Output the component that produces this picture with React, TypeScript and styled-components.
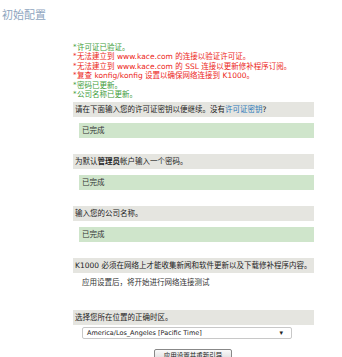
import * as React from 'react'
import styled, { createGlobalStyle } from 'styled-components'

const GlobalStyle = createGlobalStyle`
  html, body {
    margin: 0;
    padding: 0;
    background: #ffffff;
  }
  body {
    font-family: "DejaVu Sans", "Noto Sans CJK SC", sans-serif;
  }
`

const messages: { ok: boolean; text: string }[] = [
  { ok: true, text: '许可证已验证。' },
  { ok: false, text: '无法建立到 www.kace.com 的连接以验证许可证。' },
  { ok: false, text: '无法建立到 www.kace.com 的 SSL 连接以更新修补程序订阅。' },
  { ok: false, text: '复查 konfig/konfig 设置以确保网络连接到 K1000。' },
  { ok: true, text: '密码已更新。' },
  { ok: true, text: '公司名称已更新。' },
]

export default function App() {
  return (
    <Page>
      <GlobalStyle />
      <Title>初始配置</Title>
      <Content>
        <MessageList>
          {messages.map((m, i) => (
            <Message key={i} ok={m.ok}>
              <Star>*</Star>
              {m.text}
            </Message>
          ))}
        </MessageList>

        <Sections>
          <Section>
            <Prompt>
              请在下面输入您的许可证密钥以便继续。没有<Link>许可证密钥</Link>?
            </Prompt>
            <Done>已完成</Done>
          </Section>

          <Section>
            <Prompt>
              为默认<b>管理员</b>帐户输入一个密码。
            </Prompt>
            <Done>已完成</Done>
          </Section>

          <Section>
            <Prompt>输入您的公司名称。</Prompt>
            <Done>已完成</Done>
          </Section>

          <Section>
            <Prompt>K1000 必须在网络上才能收集新闻和软件更新以及下载修补程序内容。</Prompt>
            <Note>应用设置后，将开始进行网络连接测试</Note>
          </Section>

          <Section>
            <Prompt>选择您所在位置的正确时区。</Prompt>
            <Select>
              <span>America/Los_Angeles [Pacific Time]</span>
              <Arrow>▾</Arrow>
            </Select>
            <ButtonRow>
              <ApplyButton>应用设置并重新引导</ApplyButton>
            </ButtonRow>
          </Section>
        </Sections>
      </Content>
    </Page>
  )
}

const Page = styled('div')`
  width: 342px;
  height: 357px;
  overflow: hidden;
`

const Title = styled('h1')`
  margin: 0;
  padding: 7px 0 0 2px;
  font-family: "Noto Sans CJK SC", sans-serif;
  font-size: 11px;
  line-height: 14px;
  font-weight: 400;
  color: #8ea5c0;
`

const Content = styled('div')`
  margin: 22px 0 0 73px;
  width: 241px;
  display: flex;
  flex-direction: column;
  gap: 3px;
`

const MessageList = styled('div')`
  display: flex;
  flex-direction: column;
`

const Message = styled('div')<{ ok: boolean }>`
  font-size: 7.5px;
  line-height: 9.4px;
  white-space: nowrap;
  color: ${p => (p.ok ? '#3c9c38' : '#ec1e19')};
`

const Star = styled('span')`
  display: inline-block;
  width: 4px;
  font-size: 7px;
  vertical-align: 1px;
`

const Sections = styled('div')`
  display: flex;
  flex-direction: column;
  gap: 16px;
`

const Section = styled('div')`
  display: flex;
  flex-direction: column;
  min-height: 36px;
`

const Prompt = styled('div')`
  height: 15px;
  line-height: 15px;
  padding-left: 2px;
  background: #e5e5e0;
  font-size: 7.5px;
  color: #222;
  white-space: nowrap;

  b {
    font-weight: 700;
  }
`

const Link = styled('span')`
  color: #2b78b8;
`

const Done = styled('div')`
  margin: 6px 0 0 6px;
  height: 15px;
  line-height: 15px;
  padding-left: 3px;
  background: #cfe5cb;
  font-size: 7.5px;
  color: #333;
`

const Note = styled('div')`
  margin: 5px 0 0 9px;
  font-size: 7.5px;
  line-height: 10px;
  color: #333;
`

const Select = styled('div')`
  margin: 2px 0 0 9px;
  width: 210px;
  height: 12px;
  box-sizing: border-box;
  border: 1px solid #c8c8c8;
  border-radius: 2px;
  background: #fff;
  display: flex;
  align-items: center;
  justify-content: space-between;
  padding: 0 8px 0 4px;
  font-size: 6.5px;
  color: #222;
`

const Arrow = styled('span')`
  font-size: 7px;
  color: #222;
`

const ButtonRow = styled('div')`
  display: flex;
  padding-left: 81px;
  margin-top: 10px;
`

const ApplyButton = styled('button')`
  width: 78px;
  height: 12px;
  padding: 0;
  border: 1px solid #888;
  border-radius: 2px;
  background: linear-gradient(#fafafa, #dcdcdc);
  font-family: "Noto Sans CJK SC", sans-serif;
  font-size: 6.5px;
  line-height: 10px;
  color: #222;
`
